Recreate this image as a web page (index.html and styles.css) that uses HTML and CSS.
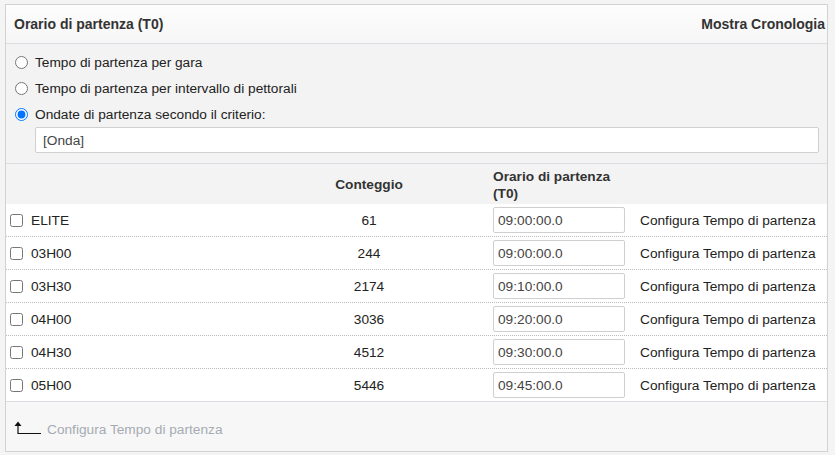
FILE: index.html
```html
<!DOCTYPE html>
<html>

<head>
    <title>Orario di partenza</title>
    <link rel="stylesheet" href="styles.css">
</head>

<body>
    <div class="panel">
        <div class="panel-head">
            <span class="panel-title">Orario di partenza (T0)</span>
            <span class="history-link">Mostra Cronologia</span>
        </div>

        <div class="modes">
            <label class="mode"><input type="radio" name="mode"> Tempo di partenza per gara</label>
            <label class="mode"><input type="radio" name="mode"> Tempo di partenza per intervallo di pettorali</label>
            <label class="mode"><input type="radio" name="mode" checked> Ondate di partenza secondo il criterio:</label>
            <input type="text" class="criteria" value="[Onda]">
        </div>

        <div class="waves">
            <div class="wave-row wave-head">
                <div></div>
                <div class="count">Conteggio</div>
                <div class="time">Orario di partenza<br>(T0)</div>
                <div></div>
            </div>
            <div id="wave-rows"></div>
        </div>

        <div class="panel-foot">
            <svg class="foot-arrow" width="28" height="14" viewBox="0 0 28 14">
                <path d="M4 3 V12.5 H27" fill="none" stroke="#111" stroke-width="1.2" />
                <path d="M0.5 5 L4 0.5 L7.5 5 Z" fill="#111" />
            </svg>
            <span class="foot-link">Configura Tempo di partenza</span>
        </div>
    </div>

    <script>
        let waves = [
            { name: "ELITE", count: 61, time: "09:00:00.0" },
            { name: "03H00", count: 244, time: "09:00:00.0" },
            { name: "03H30", count: 2174, time: "09:10:00.0" },
            { name: "04H00", count: 3036, time: "09:20:00.0" },
            { name: "04H30", count: 4512, time: "09:30:00.0" },
            { name: "05H00", count: 5446, time: "09:45:00.0" }
        ];
        let rows = document.getElementById("wave-rows");

        waves.forEach(wave => {
            let row = document.createElement("div");
            row.classList.add("wave-row");
            row.innerHTML = `
                <label class="name"><input type="checkbox"> ${wave.name}</label>
                <div class="count">${wave.count}</div>
                <div class="time"><input type="text" class="time-field" value="${wave.time}"></div>
                <div class="setup">Configura Tempo di partenza</div>`;
            rows.append(row);
        });
    </script>
</body>

</html>
```

FILE: styles.css
```css
* {
    margin: 0;
    padding: 0;
    box-sizing: border-box;
}

body {
    background-color: #f4f4f4;
    padding: 4px 7px 3px 5px;
    font: 13.7px "Liberation Sans", Arial, sans-serif;
    color: #222;
}

.panel {
    border: 1px solid #d2d2d2;
    background-color: #f3f3f3;
}

.panel-head {
    height: 39px;
    display: flex;
    justify-content: space-between;
    align-items: center;
    padding: 0 2px 0 8px;
    background: linear-gradient(#fdfdfd, #f6f6f6);
    border-bottom: 1px solid #dcdce2;
}

.panel-title,
.history-link {
    font-weight: bold;
    font-size: 14px;
    color: #333;
}

.modes {
    padding: 5px 8px 10px 8px;
    border-bottom: 1px solid #dcdce2;
}

.mode {
    display: flex;
    align-items: center;
    height: 26px;
}

.mode input {
    margin: 0 7px 0 1px;
    width: 13px;
    height: 13px;
}

.criteria {
    display: block;
    width: 784px;
    height: 26px;
    margin: 0 0 0 21px;
    padding: 0 7px;
    border: 1px solid #d0d0d0;
    border-radius: 2px;
    background-color: white;
    font: 13.7px "Liberation Sans", Arial, sans-serif;
    color: #444;
}

.wave-row {
    display: grid;
    grid-template-columns: 294px 138px 196px 1fr;
    align-items: center;
    height: 33px;
    background-color: white;
    border-bottom: 1px dotted #bbb;
}

.wave-row:last-child {
    border-bottom: 1px solid #dcdce2;
}

.wave-head {
    height: 40px;
    background-color: #f3f3f3;
    border-bottom: none;
    font-weight: bold;
    color: #333;
    line-height: 17px;
}

.wave-head .time {
    align-self: start;
    padding-top: 4px;
}

.name {
    display: flex;
    align-items: center;
    padding-left: 4px;
}

.name input {
    margin: 0 8px 0 0;
    width: 13px;
    height: 13px;
}

.count {
    text-align: center;
}

.time {
    padding-left: 55px;
}

.time-field {
    width: 132px;
    height: 26px;
    padding: 0 4px;
    border: 1px solid #cfcfcf;
    border-radius: 2px;
    font: 13.7px "Liberation Sans", Arial, sans-serif;
    color: #444;
}

.setup {
    padding-left: 6px;
}

.panel-foot {
    height: 49px;
    display: flex;
    align-items: flex-end;
    padding: 0 0 14px 8px;
    background-color: #f7f7f7;
}

.foot-arrow {
    margin-right: 5px;
    margin-bottom: 2px;
}

.foot-link {
    color: #a6abb3;
}
```
